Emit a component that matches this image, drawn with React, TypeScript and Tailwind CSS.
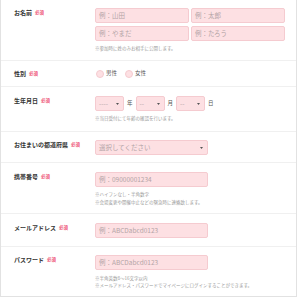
import React from 'react'

const font = { fontFamily: '"Noto Sans CJK JP", "Noto Sans", sans-serif' }

function Required() {
  return <span className="ml-[3px] text-[4.5px] font-bold text-[#ee5577] align-[1px]">必須</span>
}

function Label({ children }: { children: React.ReactNode }) {
  return (
    <div className="w-[94px] shrink-0 pl-[13px] text-[6px] leading-[9px] font-bold text-[#333]">
      {children}
      <Required />
    </div>
  )
}

function Field({ placeholder, className = '' }: { placeholder: string; className?: string }) {
  return (
    <div
      className={`h-[15px] flex items-center pl-[3px] rounded-[2px] bg-[#fde0e3] border border-[#f5cbd0] text-[6.5px] text-[#b3a4a6] ${className}`}
    >
      {placeholder}
    </div>
  )
}

function Caret() {
  return (
    <svg width="3" height="2" viewBox="0 0 3 2" className="shrink-0">
      <path d="M0 0h3L1.5 2z" fill="#555" />
    </svg>
  )
}

function Select({ value, className = '' }: { value: string; className?: string }) {
  return (
    <div
      className={`h-[15px] flex items-center justify-between pl-[3px] pr-[4px] rounded-[2px] bg-[#fde0e3] border border-[#f5cbd0] text-[6.5px] text-[#b3a4a6] ${className}`}
    >
      <span>{value}</span>
      <Caret />
    </div>
  )
}

function Note({ children, leading = 'leading-[6px]' }: { children: React.ReactNode; leading?: string }) {
  return <p className={`text-[4.5px] text-[#999] ${leading}`}>{children}</p>
}

function Radio({ label }: { label: string }) {
  return (
    <div className="flex items-center gap-[2px]">
      <span className="w-[8px] h-[8px] rounded-full bg-[#fde0e3] border border-[#f5cbd0]" />
      <span className="text-[5.5px] text-[#555]">{label}</span>
    </div>
  )
}

export default function App() {
  return (
    <div className="w-[298px] h-[300px] bg-white overflow-hidden" style={font}>
      <div className="w-[297px] border-x border-b border-[#e2e2e2]">
        {/* name */}
        <div className="flex pt-[8px] pb-[9px] border-b border-[#f0f0f0]">
          <Label>お名前</Label>
          <div className="flex flex-col">
            <div className="grid grid-cols-[94px_94px] gap-x-[2px] gap-y-[3px]">
              <Field placeholder="例：山田" />
              <Field placeholder="例：太郎" />
              <Field placeholder="例：やまだ" />
              <Field placeholder="例：たろう" />
            </div>
            <div className="mt-[4px]">
              <Note>※参加時に姓のみお相手に公開します。</Note>
            </div>
          </div>
        </div>

        {/* gender */}
        <div className="flex pt-[8px] pb-[8px] border-b border-[#f0f0f0]">
          <Label>性別</Label>
          <div className="flex items-center gap-[8px] pl-[1px]">
            <Radio label="男性" />
            <Radio label="女性" />
          </div>
        </div>

        {/* birthday */}
        <div className="flex pt-[9px] pb-[10px] border-b border-[#f0f0f0]">
          <Label>生年月日</Label>
          <div className="flex flex-col">
            <div className="flex items-center text-[5.5px] text-[#555]">
              <Select value="----" className="w-[29px]" />
              <span className="mx-[3px]">年</span>
              <Select value="--" className="w-[29px]" />
              <span className="mx-[3px]">月</span>
              <Select value="--" className="w-[29px]" />
              <span className="mx-[3px]">日</span>
            </div>
            <div className="mt-[4px]">
              <Note>※当日受付にて年齢の確認を行います。</Note>
            </div>
          </div>
        </div>

        {/* prefecture */}
        <div className="flex pt-[8px] pb-[7px] border-b border-[#f0f0f0]">
          <Label>お住まいの都道府県</Label>
          <Select value="選択してください" className="w-[113px]" />
        </div>

        {/* phone */}
        <div className="flex pt-[9px] pb-[7px] border-b border-[#f0f0f0]">
          <Label>携帯番号</Label>
          <div className="flex flex-col">
            <Field placeholder="例：09000001234" className="w-[113px]" />
            <div className="mt-[3px]">
              <Note leading="leading-[8px]">※ハイフンなし・半角数字</Note>
              <Note leading="leading-[8px]">※会場変更や開催中止などの緊急時に連絡致します。</Note>
            </div>
          </div>
        </div>

        {/* mail */}
        <div className="flex pt-[9px] pb-[8px] border-b border-[#f0f0f0]">
          <Label>メールアドレス</Label>
          <Field placeholder="例：ABCDabcd0123" className="w-[113px]" />
        </div>

        {/* password */}
        <div className="flex pt-[8px] pb-[7px]">
          <Label>パスワード</Label>
          <div className="flex flex-col">
            <Field placeholder="例：ABCDabcd0123" className="w-[113px]" />
            <div className="mt-[5px]">
              <Note leading="leading-[7px]">※半角英数8〜16文字以内</Note>
              <Note leading="leading-[7px]">※メールアドレス・パスワードでマイページにログインすることができます。</Note>
            </div>
          </div>
        </div>
      </div>
    </div>
  )
}
